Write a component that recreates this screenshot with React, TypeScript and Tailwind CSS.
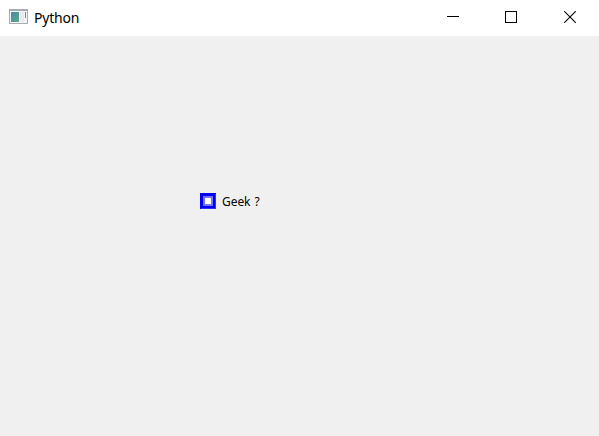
function AppIcon() {
  return (
    <svg width="20" height="16" viewBox="0 0 20 16" shapeRendering="crispEdges">
      <defs>
        <linearGradient id="pane" x1="0" y1="0" x2="1" y2="1">
          <stop offset="0" stopColor="#4a86a8" />
          <stop offset="1" stopColor="#5cab86" />
        </linearGradient>
      </defs>
      <rect x="0" y="0" width="19" height="15" fill="#a9adb3" />
      <rect x="1" y="2" width="17" height="12" fill="#f4f5f7" />
      <rect x="2" y="3" width="8" height="10" fill="url(#pane)" />
      <rect x="11" y="3" width="4" height="10" fill="#e9eaf0" />
      <rect x="16" y="3" width="1" height="6" fill="#5c9aa5" />
    </svg>
  );
}

function TitleBar() {
  return (
    <header className="flex h-9 items-start bg-white">
      <div className="mt-[9px] ml-[9px]"><AppIcon /></div>
      <span className="mt-[8px] ml-[5px] text-[14px] leading-5 tracking-[-0.2px]">Python</span>
      <div className="mt-[11px] mr-[23px] ml-auto flex gap-[46px]">
        <svg width="12" height="12" shapeRendering="crispEdges"><rect y="5" width="12" height="1" /></svg>
        <svg width="12" height="12" fill="none" stroke="black"><rect x=".5" y=".5" width="11" height="11" /></svg>
        <svg width="13" height="12" stroke="black" strokeWidth="1.1"><path d="M1.2 .2L12.8 11.8M12.8 .2L1.2 11.8" /></svg>
      </div>
    </header>
  );
}

function CheckBox({ label }: { label: string }) {
  return (
    <label className="flex h-4 items-center gap-1.5 text-[12px] leading-4">
      <svg width="16" height="16" shapeRendering="crispEdges">
        <rect width="16" height="16" fill="#0000f4" />
        <path d="M15 1H16V16H1V15H15Z" fill="#3030ff" />
        <rect x="3" y="3" width="10" height="10" fill="#7373ff" />
        <rect x="5" y="5" width="6" height="6" fill="white" />
      </svg>
      <span className="pt-0.5 tracking-[-0.05px] [word-spacing:1px]">{label}</span>
    </label>
  );
}

export default function App() {
  return (
    <div className="flex h-[436px] w-[599px] flex-col bg-[#f0f0f0] font-['Noto_Sans','Open_Sans',sans-serif] text-black">
      <TitleBar />
      <main className="flex-1 pt-[157px] pl-[200px]">
        <CheckBox label="Geek ?" />
      </main>
    </div>
  );
}
